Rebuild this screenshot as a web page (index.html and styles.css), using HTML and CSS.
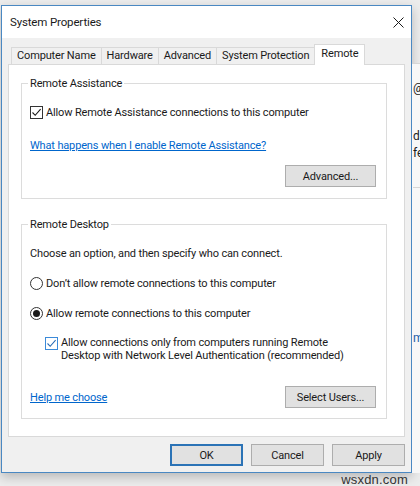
FILE: index.html
```html
<!DOCTYPE html>
<html lang="en">
<head>
<meta charset="utf-8">
<title>System Properties</title>
<link rel="stylesheet" href="styles.css">
</head>
<body>
<div class="desktop">
  <div class="window">
    <div class="titlebar">
      <span class="title">System Properties</span>
      <svg class="close" width="11" height="11" viewBox="0 0 11 11" aria-label="Close">
        <path d="M0.5 0.5 L10.5 10.5 M10.5 0.5 L0.5 10.5" stroke="#1a1a1a" stroke-width="1" fill="none"/>
      </svg>
    </div>

    <div class="tabs">
      <div class="tab">Computer Name</div>
      <div class="tab">Hardware</div>
      <div class="tab">Advanced</div>
      <div class="tab">System Protection</div>
      <div class="tab active">Remote</div>
    </div>

    <div class="panel">
      <fieldset class="group">
        <legend>Remote Assistance</legend>
        <label class="check">
          <span class="box">
            <svg width="11" height="11" viewBox="0 0 11 11"><path d="M1.5 5.5 L4.2 8.3 L9.6 2.2" stroke="#1a1a1a" stroke-width="1.1" fill="none"/></svg>
          </span>
          <span>Allow Remote Assistance connections to this computer</span>
        </label>
        <a class="link first">What happens when I enable Remote Assistance?</a>
        <div class="row-end">
          <button class="btn wide">Advanced...</button>
        </div>
      </fieldset>

      <fieldset class="group second">
        <legend>Remote Desktop</legend>
        <p class="note">Choose an option, and then specify who can connect.</p>
        <label class="radio"><span class="dot"></span><span>Don’t allow remote connections to this computer</span></label>
        <label class="radio"><span class="dot on"></span><span>Allow remote connections to this computer</span></label>
        <label class="check sub">
          <span class="box focus">
            <svg width="11" height="11" viewBox="0 0 11 11"><path d="M1.5 5.5 L4.2 8.3 L9.6 2.2" stroke="#2a6db5" stroke-width="1.1" fill="none"/></svg>
          </span>
          <span>Allow connections only from computers running Remote<br>Desktop with Network Level Authentication (recommended)</span>
        </label>
        <div class="row-between">
          <a class="link">Help me choose</a>
          <button class="btn wide">Select Users...</button>
        </div>
      </fieldset>
    </div>

    <div class="actions">
      <button class="btn std default">OK</button>
      <button class="btn std">Cancel</button>
      <button class="btn std">Apply</button>
    </div>
  </div>

  <div class="side">
    <div class="side-pane">
      <div class="frag at">@</div>
      <div class="frag d">d</div>
      <div class="frag fe">fe</div>
      <div class="side-rule"></div>
      <div class="frag m">m</div>
    </div>
  </div>
</div>
<div class="watermark">wsxdn.com</div>
</body>
</html>
```

FILE: styles.css
```css
* {
  box-sizing: border-box;
}

html,
body {
  margin: 0;
}

body {
  width: 420px;
  height: 486px;
  overflow: hidden;
  padding: 5px 0 0 1px;
  background: #ececec;
  font-family: Roboto, "Liberation Sans", sans-serif;
  font-size: 11px;
  letter-spacing: -0.15px;
  color: #1a1a1a;
}

/* desktop: dialog window plus the sliver of the app behind it */
.desktop {
  display: flex;
}

.window {
  flex: 0 0 411px;
  border: 1px solid #4a88c2;
  background: #f0f0f0;
  box-shadow: 0 4px 10px rgba(0, 0, 0, 0.22);
}

.titlebar {
  height: 32px;
  background: #fff;
  display: flex;
  align-items: center;
  justify-content: space-between;
  padding: 0 7px 0 8px;
}

.title {
  font-size: 11.5px;
}

.close {
  display: block;
}

/* tab strip */
.tabs {
  display: flex;
  align-items: flex-end;
  height: 26px;
  margin: 0 6px;
  padding-left: 3px;
}

.tab {
  height: 17px;
  padding: 0 5px;
  line-height: 16px;
  border: 1px solid #d9d9d9;
  border-bottom: 0;
  margin-left: -1px;
  background: #f0f0f0;
  white-space: nowrap;
}

.tab:first-child {
  margin-left: 0;
}

.tab.active {
  position: relative;
  z-index: 1;
  height: 21px;
  margin-bottom: -1px;
  padding: 0 6px;
  line-height: 18px;
  background: #fff;
}

.panel {
  margin: 0 6px;
  background: #fff;
  border: 1px solid #d9d9d9;
  padding: 0 17px 17px 12px;
}

/* group boxes */
.group {
  margin: 11px 0 0;
  padding: 14px 10px 11px 8px;
  border: 1px solid #dcdcdc;
  min-width: 0;
}

.group.second {
  margin-top: 18px;
  padding-bottom: 10px;
}

legend {
  padding: 0 2px;
  margin-left: -2px;
  line-height: 15px;
}

.check {
  display: flex;
  align-items: flex-start;
  line-height: 15px;
}

.box {
  flex: 0 0 13px;
  width: 13px;
  height: 13px;
  margin: 1px 3px 0 0;
  border: 1px solid #333;
  background: #fff;
  display: flex;
  align-items: center;
  justify-content: center;
}

.box.focus {
  border-color: #3b8ad9;
}

.check.sub {
  margin: 15px 0 0 15px;
  line-height: 13px;
}

.check.sub .box {
  margin-top: 1px;
}

.link {
  display: block;
  width: fit-content;
  line-height: 15px;
  color: #0066cc;
  text-decoration: underline;
}

.link.first {
  margin-top: 18px;
}

.row-end {
  display: flex;
  justify-content: flex-end;
  margin-top: 12px;
}

.row-between {
  display: flex;
  justify-content: space-between;
  align-items: center;
  margin-top: 24px;
}

.note {
  margin: 0;
  line-height: 15px;
}

.radio {
  display: flex;
  align-items: center;
  margin-top: 15px;
  line-height: 15px;
}

.dot {
  flex: 0 0 13px;
  width: 13px;
  height: 13px;
  margin-right: 3px;
  border: 1px solid #333;
  border-radius: 50%;
  background: #fff;
  display: flex;
  align-items: center;
  justify-content: center;
}

.dot.on::after {
  content: "";
  width: 7px;
  height: 7px;
  border-radius: 50%;
  background: #1a1a1a;
}

/* push buttons */
.btn {
  height: 22px;
  padding: 0;
  border: 1px solid #adadad;
  background: #e1e1e1;
  font: inherit;
  letter-spacing: inherit;
  color: inherit;
}

.btn.wide {
  width: 91px;
}

.btn.std {
  width: 73px;
}

.btn.default {
  border: 2px solid #2b73b6;
}

.actions {
  display: flex;
  justify-content: flex-end;
  gap: 8px;
  padding: 7px 6px 6px 0;
}

/* app window peeking out on the right */
.side {
  flex: 1;
  min-width: 0;
  overflow: hidden;
  padding-top: 58px;
  display: flex;
  flex-direction: column;
}

.side-pane {
  flex: 1;
  border-top: 1px solid #d6d6d6;
  background: #f7f7f7;
  padding-left: 1px;
  font-size: 12px;
  line-height: 15px;
  white-space: nowrap;
}

.frag.at {
  margin-top: 17px;
}

.frag.d {
  margin-top: 33px;
}

.frag.fe {
  margin-top: 2px;
}

.side-rule {
  margin-top: 26px;
  border-top: 1px solid #d6d6d6;
}

.frag.m {
  margin-top: 143px;
  color: #1e5fa8;
}

.watermark {
  padding: 0 12px 0 0;
  text-align: right;
  font-family: "Liberation Sans", sans-serif;
  font-size: 13px;
  letter-spacing: 0.2px;
  line-height: 14px;
  color: #333;
}
```
